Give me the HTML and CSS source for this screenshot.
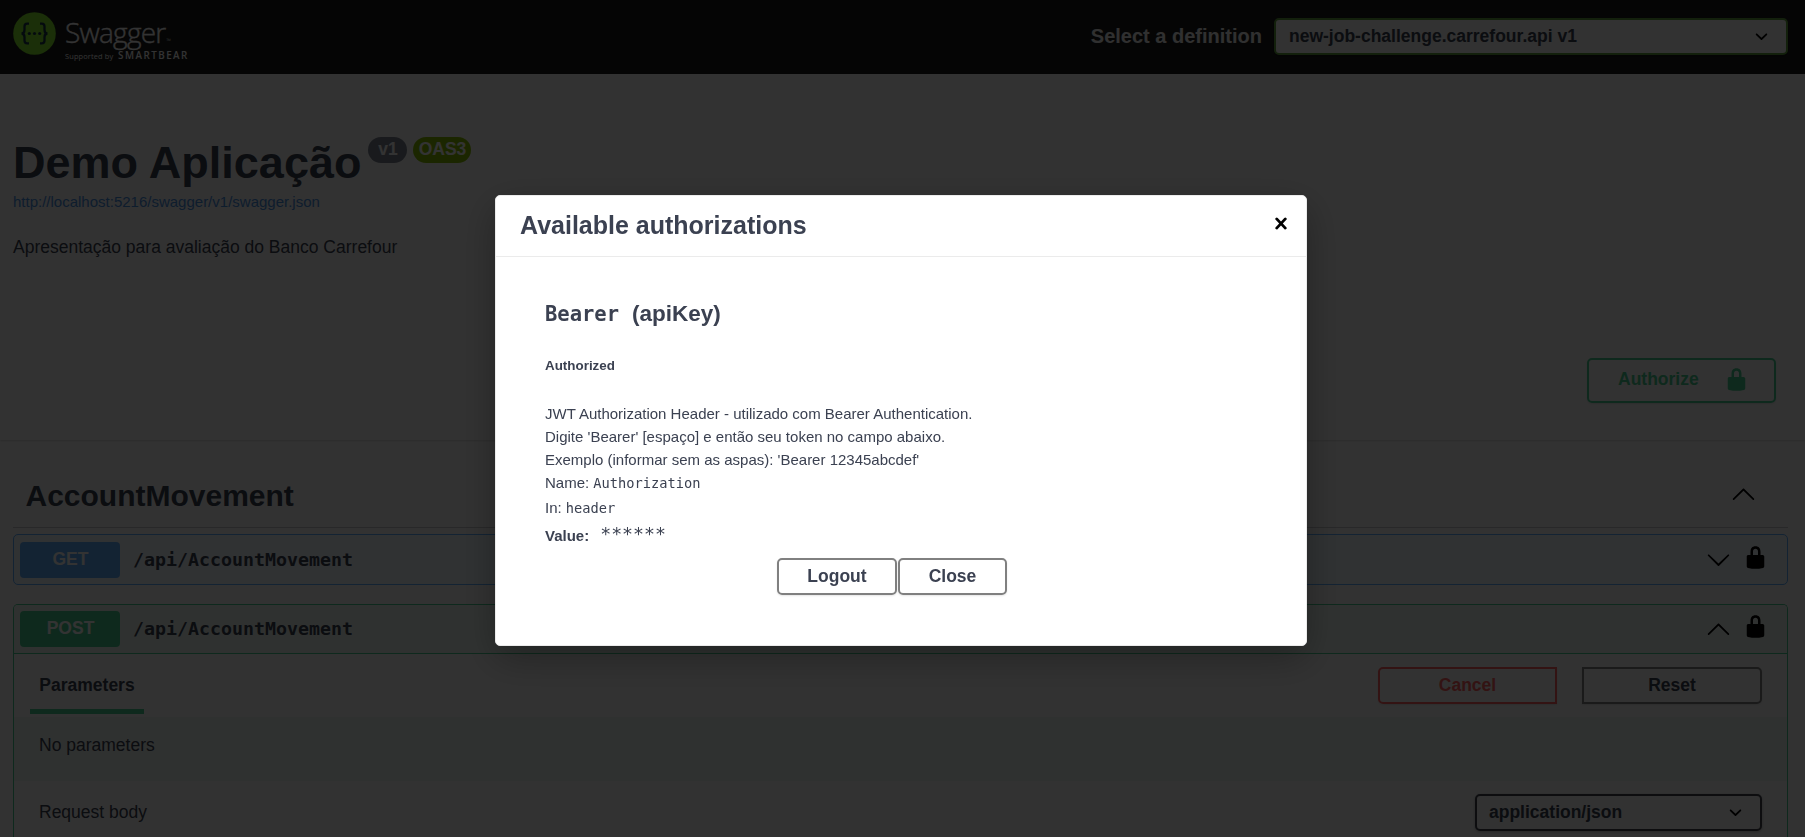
FILE: index.html
```html
<!DOCTYPE html>
<html lang="pt-BR">
<head>
<meta charset="utf-8">
<title>Swagger UI</title>
<link rel="stylesheet" href="styles.css">
</head>
<body>
<svg class="defs" width="0" height="0">
  <symbol id="lock" viewBox="0 0 20 20"><path d="M15.8 8H14V5.6C14 2.703 12.665 1 10 1 7.334 1 6 2.703 6 5.6V8H4c-.553 0-1 .646-1 1.199V17c0 .549.428 1.139.951 1.307l1.197.387C5.672 18.861 6.55 19 7.1 19h5.8c.549 0 1.428-.139 1.951-.307l1.196-.387c.524-.167.953-.757.953-1.306V9.199C17 8.646 16.352 8 15.8 8zM12 8H8V5.199C8 3.754 8.797 3 10 3c1.203 0 2 .754 2 2.199V8z"/></symbol>
  <symbol id="down" viewBox="0 0 20 20"><path d="M17.418 6.109c.272-.268.709-.268.979 0s.271.701 0 .969l-7.908 7.83c-.27.268-.707.268-.979 0l-7.908-7.83c-.27-.268-.27-.701 0-.969.271-.268.709-.268.979 0L10 13.25l7.418-7.141z"/></symbol>
  <symbol id="up" viewBox="0 0 20 20"><path d="M17.418 14.908c.272.27.709.27.979 0s.271-.701 0-.969l-7.908-7.83c-.27-.268-.707-.268-.979 0l-7.908 7.83c-.27.268-.27.701 0 .969.271.268.709.268.979 0L10 7.767l7.418 7.141z"/></symbol>
  <symbol id="chev" viewBox="0 0 20 20"><path d="M13.418 7.859c.271-.268.709-.268.978 0 .27.268.272.701 0 .969l-3.908 3.83c-.27.268-.707.268-.979 0l-3.908-3.83c-.27-.267-.27-.701 0-.969.271-.268.709-.268.978 0L10 11l3.418-3.141z"/></symbol>
</svg>

<header class="topbar">
  <div class="brand">
    <svg class="brand-mark" viewBox="0 0 43 43">
      <circle cx="21.5" cy="21.5" r="21.3" fill="#85ea2d"/>
      <g fill="none" stroke="#173647" stroke-width="2.3">
        <path d="M16 11.7h-1.8q-2.7 0-2.7 2.8v3.3q0 3.7-3 3.7q3 0 3 3.7v3.3q0 2.8 2.7 2.8H16"/>
        <path d="M27 11.7h1.8q2.7 0 2.7 2.8v3.3q0 3.7 3 3.7q-3 0-3 3.7v3.3q0 2.8-2.7 2.8H27"/>
      </g>
      <g fill="#173647"><circle cx="16.3" cy="21.5" r="1.6"/><circle cx="21.5" cy="21.5" r="1.6"/><circle cx="26.7" cy="21.5" r="1.6"/></g>
    </svg>
    <div class="brand-text">
      <div class="brand-name">Swagger<span class="tm">™</span></div>
      <div class="brand-sub"><span>Supported by</span><b>SMARTBEAR</b></div>
    </div>
  </div>
  <div class="definition">
    <span class="definition-label">Select a definition</span>
    <div class="select definition-select"><span>new-job-challenge.carrefour.api v1</span><svg><use href="#chev"/></svg></div>
  </div>
</header>

<section class="info">
  <h1 class="title">Demo Aplicação<span class="badge badge-version">v1</span><span class="badge badge-oas">OAS3</span></h1>
  <a class="spec-url">http://localhost:5216/swagger/v1/swagger.json</a>
  <p class="description">Apresentação para avaliação do Banco Carrefour</p>
</section>

<section class="scheme">
  <div class="btn btn-authorize"><span>Authorize</span><svg><use href="#lock"/></svg></div>
</section>

<main class="operations">
  <div class="tag"><h2>AccountMovement</h2><svg><use href="#up"/></svg></div>
  <div class="op op-get">
    <div class="op-summary">
      <span class="method">GET</span><span class="path">/api/AccountMovement</span>
      <svg class="arrow"><use href="#down"/></svg><svg class="lock"><use href="#lock"/></svg>
    </div>
  </div>
  <div class="op op-post">
    <div class="op-summary">
      <span class="method">POST</span><span class="path">/api/AccountMovement</span>
      <svg class="arrow"><use href="#up"/></svg><svg class="lock"><use href="#lock"/></svg>
    </div>
    <div class="op-head">
      <div class="tab">Parameters</div>
      <div class="op-actions"><div class="btn btn-cancel">Cancel</div><div class="btn btn-reset">Reset</div></div>
    </div>
    <div class="op-empty">No parameters</div>
    <div class="op-body">
      <span>Request body</span>
      <div class="select type-select"><span>application/json</span><svg><use href="#chev"/></svg></div>
    </div>
  </div>
</main>

<div class="overlay">
  <div class="modal">
    <div class="modal-head">
      <h3>Available authorizations</h3>
      <svg class="close" viewBox="0 0 12 13"><path d="M1.7 1.9l8.6 9.2M10.3 1.9l-8.6 9.2"/></svg>
    </div>
    <div class="modal-body">
      <h4><code>Bearer</code><span>(apiKey)</span></h4>
      <h6>Authorized</h6>
      <p>JWT Authorization Header - utilizado com Bearer Authentication.<br>Digite 'Bearer' [espaço] e então seu token no campo abaixo.<br>Exemplo (informar sem as aspas): 'Bearer 12345abcdef'</p>
      <div class="row row-name">Name: <code>Authorization</code></div>
      <div class="row row-in">In: <code>header</code></div>
      <div class="row row-value"><b>Value:</b><code>******</code></div>
      <div class="modal-actions"><div class="btn btn-logout">Logout</div><div class="btn btn-close">Close</div></div>
    </div>
  </div>
</div>
</body>
</html>
```
FILE: styles.css
```css
* { box-sizing: border-box; }
html, body { height: 100%; overflow: hidden; }
body {
  margin: 0;
  background: #fafafa;
  color: #3b4151;
  font-family: "Liberation Sans", Arial, sans-serif;
  font-size: 17.5px;
}
h1, h2, h3, h4, h6, p { margin: 0; }
code, .path { font-family: "DejaVu Sans Mono", monospace; }
.defs { position: absolute; }

.topbar {
  height: 74px;
  padding: 0 17px 0 13px;
  background: #1b1b1b;
  display: flex;
  justify-content: space-between;
}
.brand { display: flex; gap: 9px; padding-top: 12px; color: #fff; font-family: "Open Sans", sans-serif; }
.brand-mark { width: 43px; height: 43px; }
.brand-name { font-size: 28px; font-weight: 300; line-height: 34px; letter-spacing: -0.75px; padding-top: 3px; height: 37px; white-space: nowrap; -webkit-text-stroke: 0.35px #fff; }
.tm { font-size: 6px; letter-spacing: 0; margin-left: 1px; -webkit-text-stroke: 0; }
.brand-sub { display: flex; align-items: baseline; font-size: 7.4px; line-height: 14px; letter-spacing: 0.15px; white-space: nowrap; }
.brand-sub span { width: 53px; }
.brand-sub b { font-size: 9.8px; font-weight: 600; letter-spacing: 1.5px; }
.definition { display: flex; align-items: center; padding-bottom: 1px; }
.definition-label { color: #f0f0f0; font-size: 20px; font-weight: 700; margin-right: 12px; }

.select {
  display: flex;
  align-items: center;
  justify-content: space-between;
  height: 37px;
  border: 2px solid #41444e;
  border-radius: 5px;
  font-weight: 700;
  background: #f7f7f7;
  box-shadow: 0 1px 3px rgba(0,0,0,.25);
}
.select svg { width: 25px; height: 25px; fill: #000; }
.definition-select { width: 514px; border-color: #62a03f; padding: 0 12px 0 13px; }
.type-select { width: 287px; padding: 0 12px; }

.info { height: 234px; padding: 63px 13px 0; }
.title { display: flex; height: 51px; font-size: 45px; line-height: 51px; white-space: nowrap; }
.badge {
  height: 26px;
  line-height: 24px;
  border-radius: 13px;
  color: #fff;
  font-size: 17.5px;
  text-align: center;
}
.badge-version { width: 39px; margin-left: 7px; background: #7d8492; }
.badge-oas { width: 58px; margin-left: 6px; background: #89bf04; }
.spec-url { display: block; margin-top: 5px; font-size: 15px; line-height: 18px; color: #4990e2; }
.description { margin-top: 26px; line-height: 20px; }

.scheme {
  height: 132px;
  padding: 50px 29px 0;
  display: flex;
  justify-content: flex-end;
  box-shadow: 0 1px 2px rgba(0,0,0,.15);
}
.btn {
  display: flex;
  align-items: center;
  justify-content: center;
  height: 37px;
  border: 2px solid #808080;
  border-radius: 5px;
  font-size: 17.5px;
  font-weight: 700;
  box-shadow: 0 1px 2px rgba(0,0,0,.1);
}
.btn-authorize { width: 189px; height: 45px; justify-content: space-between; padding: 0 25px 3px 29px; border-color: #49cc90; color: #49cc90; }
.btn-authorize svg { width: 25px; height: 25px; fill: #49cc90; }

.operations { padding: 0 17px 0 13px; }
.tag {
  height: 88px;
  padding: 26px 32px 0 12.5px;
  display: flex;
  justify-content: space-between;
  border-bottom: 1px solid #c7c8cb;
}
.tag h2 { font-size: 30px; line-height: 59px; }
.tag svg { width: 25px; height: 25px; margin-top: 15px; }

.op { border: 1px solid; border-radius: 5px; }
.op-get { margin-top: 6px; height: 51px; border-color: #61affe; background: #eff7ff; }
.op-post { margin-top: 19px; height: 233px; border-color: #49cc90; border-bottom: 0; border-radius: 5px 5px 0 0; }
.op-summary { display: flex; align-items: center; height: 49px; padding: 0 19px 0 6px; }
.op-post .op-summary { border-bottom: 1px solid #49cc90; background: #ecf6f1; border-radius: 4px 4px 0 0; }
.method { width: 100px; height: 36px; line-height: 34px; border-radius: 4px; color: #fff; font-weight: 700; text-align: center; }
.op-get .method { background: #61affe; padding-left: 1px; }
.op-post .method { background: #49cc90; padding-left: 1px; }
.path { margin-left: 13px; font-size: 18.27px; font-weight: 700; }
.arrow { width: 25px; height: 25px; margin-left: auto; }
.op-post .path, .op-post .arrow { margin-bottom: 2px; }
.lock { width: 25px; height: 25px; margin: -5px 0 0 12px; }

.op-head { display: flex; justify-content: space-between; height: 63px; padding: 13px 25px 0 16px; }
.tab { width: 114px; height: 47px; border-bottom: 5px solid #49cc90; text-align: center; font-weight: 700; line-height: 37px; }
.op-actions { display: flex; gap: 25px; }
.btn-cancel { width: 179px; border-color: #ff6060; color: #ff6060; border-radius: 5px 0 0 5px; }
.btn-reset { width: 180px; border-radius: 0 5px 5px 0; }
.op-empty { height: 64px; padding: 18px 25px; line-height: 20px; background: #ecf3ef; }
.op-body { display: flex; justify-content: space-between; padding: 13px 25px 0; line-height: 37px; }

.overlay {
  position: fixed;
  inset: 0;
  background: rgba(0,0,0,.8);
  display: flex;
  justify-content: center;
  align-items: flex-start;
  padding: 195px 3px 0 0;
}
.modal {
  width: 812px;
  height: 451px;
  background: #fff;
  border: 1px solid #ebebeb;
  border-radius: 5px;
  box-shadow: 0 12px 38px rgba(0,0,0,.3);
}
.modal-head { display: flex; justify-content: space-between; height: 61px; border-bottom: 1px solid #ebebeb; padding: 0 19px 0 24px; }
.modal-head h3 { font-size: 25px; line-height: 58px; }
.close { width: 12px; height: 13px; margin-top: 21px; fill: none; stroke: #000; stroke-width: 2.8; stroke-linecap: round; }
.modal-body { padding: 41px 49px 0; font-size: 15px; }
.modal-body h4 { display: flex; align-items: baseline; font-size: 22.5px; line-height: 32px; height: 32px; }
.modal-body h4 code { font-size: 20.5px; margin-right: 13px; }
.modal-body h6 { margin-top: 28px; font-size: 13.4px; line-height: 16px; }
.modal-body p { margin-top: 28px; line-height: 23px; }
.row { line-height: 24px; height: 24px; }
.row-name { height: 25px; }
.row code { font-size: 13.7px; }
.row-value { display: flex; align-items: center; margin-top: 4px; }
.row-value code { font-size: 18.2px; margin: -5px 0 0 11px; }
.modal-actions { display: flex; justify-content: center; gap: 1px; margin-top: 10px; padding-right: 18px; }
.btn-logout { width: 120px; }
.btn-close { width: 109px; }
```
